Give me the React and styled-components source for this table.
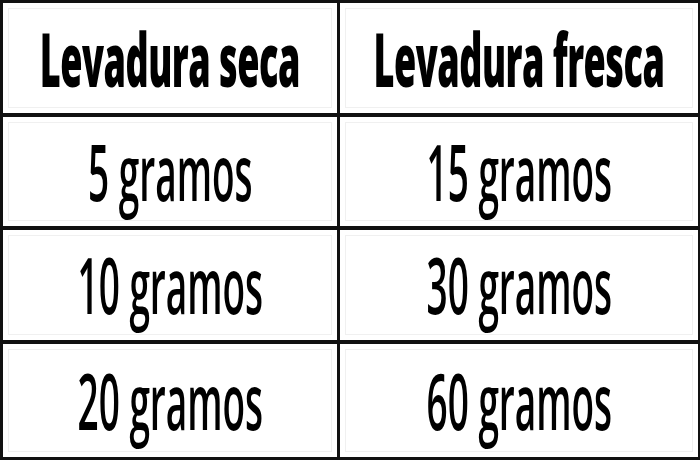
import React from "react";
import styled, { createGlobalStyle } from "styled-components";

const Global = createGlobalStyle`
  html, body { margin: 0; padding: 0; background: #fff; }
  body { width: 700px; height: 460px; overflow: hidden; }
`;

const Table = styled.div`
  box-sizing: border-box;
  width: 700px;
  height: 460px;
  display: grid;
  grid-template-columns: 337px 1fr;
  grid-template-rows: repeat(4, 1fr);
  border-top: 3px solid #111;
  border-left: 3px solid #111;
  border-right: 2px solid #111;
  border-bottom: 3px solid #111;
  background: #fff;
  font-family: "Open Sans", "Noto Sans", sans-serif;
  color: #000;
`;

const Cell = styled.div`
  box-sizing: border-box;
  display: flex;
  align-items: center;
  justify-content: center;
  overflow: hidden;
  border-bottom: ${(p) => (p.$last ? "none" : "4px solid #111")};
  border-right: ${(p) => (p.$left ? "3px solid #111" : "none")};
  box-shadow: inset 0 0 0 5px #fff, inset 0 0 0 6px #f0f0f0;
`;

const Label = styled.span`
  display: inline-block;
  white-space: nowrap;
  font-size: ${(p) => (p.$head ? "75px" : "77px")};
  font-weight: ${(p) => (p.$head ? 800 : 600)};
  line-height: 1;
  transform: scaleX(0.48);
  letter-spacing: ${(p) => (p.$head ? "-1px" : "0")};
  margin-top: ${(p) => (p.$head ? "2px" : "0")};
`;

const rows = [
  ["Levadura seca", "Levadura fresca"],
  ["5 gramos", "15 gramos"],
  ["10 gramos", "30 gramos"],
  ["20 gramos", "60 gramos"],
];

export default function App() {
  return (
    <>
      <Global />
      <Table>
        {rows.map((r, i) =>
          r.map((t, j) => (
            <Cell key={`${i}-${j}`} $left={j === 0} $last={i === rows.length - 1}>
              <Label $head={i === 0}>{t}</Label>
            </Cell>
          ))
        )}
      </Table>
    </>
  );
}
